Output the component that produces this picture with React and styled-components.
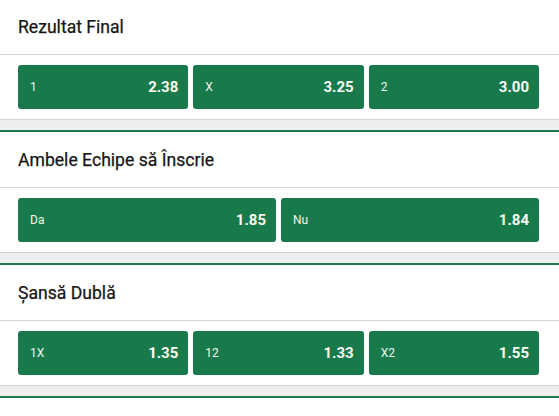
import React from 'react';
import styled, { createGlobalStyle } from 'styled-components';

const GlobalStyle = createGlobalStyle`
  body {
    margin: 0;
    background: #ffffff;
    font-family: Roboto, 'Liberation Sans', sans-serif;
    overflow: hidden;
  }
`;

const Page = styled.div`
  display: flex;
  flex-direction: column;
  margin-top: -3px; /* list is scrolled a little */
  border-bottom: 2px solid #1d7a4b;
`;

const Market = styled.section`
  display: flex;
  flex-direction: column;
  border-top: 2px solid #1d7a4b;
  background: #eeeeee;
  padding-bottom: 10px;
`;

const Header = styled.div`
  display: flex;
  align-items: center;
  height: 55px;
  padding: 0 18px;
  background: #ffffff;
  border-bottom: 1px solid #d3d3d3;
  font-size: 17.6px;
  font-weight: 400;
  color: #161616;
  -webkit-text-stroke: 0.25px #161616;
`;

const Outcomes = styled.div`
  display: grid;
  grid-template-columns: repeat(${p => p.$cols}, 1fr);
  gap: 5px;
  padding: 10px 20px 10px 18px;
  background: #ffffff;
  border-bottom: 1px solid #d3d3d3;
`;

const OddButton = styled.button`
  display: flex;
  align-items: center;
  justify-content: space-between;
  height: 44px;
  padding: 0 10px 0 12px;
  border: none;
  border-radius: 3px;
  background: #187a4a;
  color: #ffffff;
  font-family: inherit;
  cursor: pointer;
`;

const Label = styled.span`
  font-size: 12px;
  font-weight: 400;
  color: #f1f6f3;
`;

const Price = styled.span`
  font-size: 15px;
  font-weight: 700;
  color: #fbfbf3;
`;

const markets = [
  {
    title: 'Rezultat Final',
    odds: [['1', '2.38'], ['X', '3.25'], ['2', '3.00']],
  },
  {
    title: 'Ambele Echipe să Înscrie',
    odds: [['Da', '1.85'], ['Nu', '1.84']],
  },
  {
    title: 'Șansă Dublă',
    odds: [['1X', '1.35'], ['12', '1.33'], ['X2', '1.55']],
  },
];

export default function App() {
  return (
    <>
      <GlobalStyle />
      <Page>
        {markets.map(m => (
          <Market key={m.title}>
            <Header>{m.title}</Header>
            <Outcomes $cols={m.odds.length}>
              {m.odds.map(([label, price]) => (
                <OddButton key={label}>
                  <Label>{label}</Label>
                  <Price>{price}</Price>
                </OddButton>
              ))}
            </Outcomes>
          </Market>
        ))}
      </Page>
    </>
  );
}
